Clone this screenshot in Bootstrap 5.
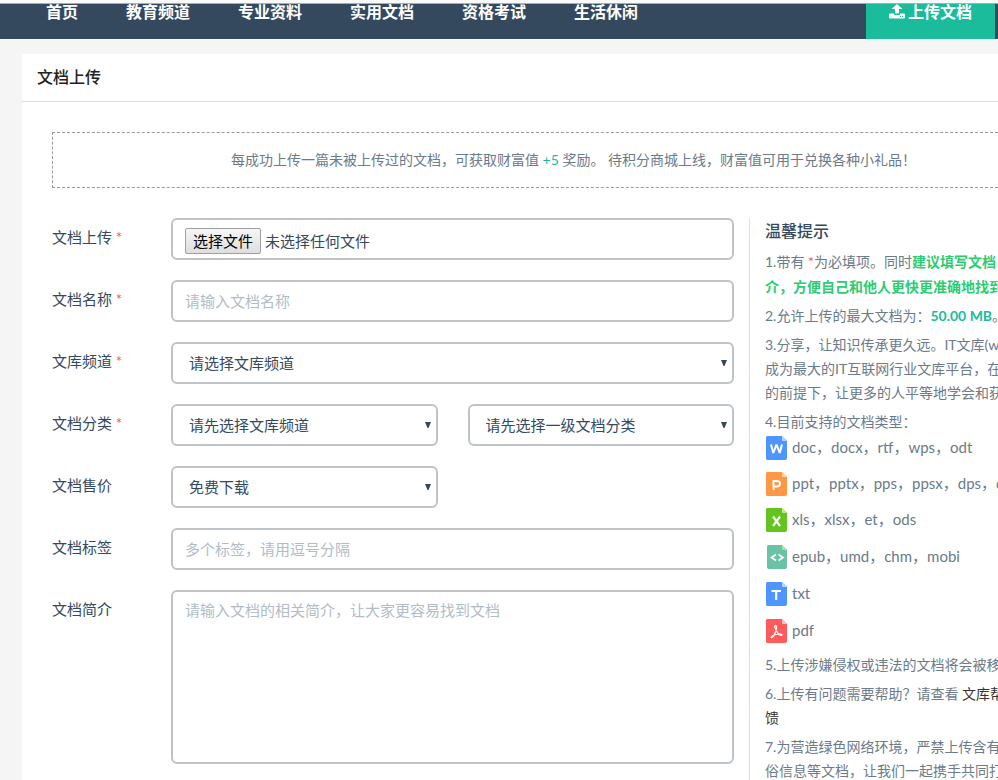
<!DOCTYPE html>
<html lang="zh-CN">
<head>
<meta charset="utf-8">
<meta name="viewport" content="width=device-width, initial-scale=1">
<title>文档上传</title>
<link href="https://cdn.jsdelivr.net/npm/bootstrap@5.3.0/dist/css/bootstrap.min.css" rel="stylesheet">
<style>
body{background:#f5f5f5;color:#34495e;font-family:Lato,"Noto Sans CJK SC",sans-serif;font-size:15px}
.top-edge{height:4px;border-bottom:1px solid #a9adb1;background:#fbfbfb}
.site-nav{background:#34495e;font-size:16px;font-weight:700;line-height:16px;height:35px;padding:0 3px 0 22px}
.site-nav a{color:#fff;text-decoration:none;padding:0 24px;display:block}
.site-nav .upload-link{background:#1abc9c;padding:0 23px;gap:3px;display:flex}
.page-panel{margin:15px 0 0 22px}
.panel-title{font-size:16px;font-weight:500;line-height:45px;padding:0 15px 2px;border-bottom:1px solid #ddd;color:#222}
.panel-content{padding:30px 0 0 30px}
.notice{border:1px dashed #999;border-right:0;line-height:54px;font-size:14px;color:#6c7a89;padding-left:96px;margin-bottom:30px}
.accent{color:#1abc9c}
.star{color:#e85a5a}
.field{margin-bottom:20px}
.field-label{width:119px;line-height:38px}
.form-control,.form-select{border:2px solid #bdc3c7;border-radius:6px;color:#34495e;font-size:15px;height:42px;padding:0 12px;line-height:24px}
.form-control::placeholder{color:#b2bcc5;opacity:1}
.form-select{padding:0 16px;background-image:url("data:image/svg+xml,%3Csvg xmlns='http://www.w3.org/2000/svg' viewBox='0 0 6 6'%3E%3Cpath fill='%2334495e' d='M0 0h6L3.5 6h-1z'/%3E%3C/svg%3E");background-size:6px 6px;background-position:right 5px center}
textarea.form-control{height:174px;padding-top:6px;resize:none}
.pick-file{border:1px solid #a0a0a0;border-radius:2px;background:linear-gradient(#f6f6f6,#dedede);color:#000;line-height:24px;padding:0 7px}
.pair{display:grid;grid-template-columns:1fr 1fr;gap:30px}
.tips{width:249px;margin-left:15px;border-left:1px solid #ddd;padding-left:15px;font-size:14px;line-height:24px;color:#6c7a89;white-space:nowrap}
.tips h2{font-size:16px;font-weight:500;line-height:26px;margin-bottom:5px;color:#34495e}
.tips p{margin-bottom:5px}
.tips .lead-tip{line-height:25px}
.tips strong{color:#2ecc71}
.tips strong.accent{color:#1abc9c}
.tips a{color:#333;text-decoration:none}
.tips .types-tip{margin-bottom:2px}
.types{margin:0 0 10px;font-size:15px}
.types li{display:flex;gap:5px;line-height:22px;height:24px;margin-bottom:12px}
.types li:nth-child(n+3){margin-bottom:13px}
.types li:last-child{margin-bottom:0}
.types svg{width:22px;height:24px;flex:none}
</style>
<script src="https://cdn.jsdelivr.net/npm/bootstrap@5.3.0/dist/js/bootstrap.bundle.min.js"></script>
</head>
<body class="vh-100 overflow-hidden d-flex flex-column">
<div class="top-edge flex-shrink-0"></div>
<nav class="site-nav d-flex flex-shrink-0">
  <ul class="list-unstyled d-flex mb-0 flex-grow-1">
    <li><a href="#">首页</a></li>
    <li><a href="#">教育频道</a></li>
    <li><a href="#">专业资料</a></li>
    <li><a href="#">实用文档</a></li>
    <li><a href="#">资格考试</a></li>
    <li><a href="#">生活休闲</a></li>
  </ul>
  <a class="upload-link" href="#"><svg width="16" height="16" viewBox="0 0 16 16" fill="#fff" aria-hidden="true"><path d="M8 0l5.500 5H10v4.500H6V5H2.500z"/><path fill-rule="evenodd" d="M1 9.500h4v1q0 .5 1 .5h4q1 0 1-.5v-1h4q1 0 1 1v3q0 1-1 1H1q-1 0-1-1v-3q0-1 1-1zM11 12v1h1v-1zM13 12v1h1v-1z"/></svg>上传文档</a>
</nav>
<main class="page-panel bg-white flex-grow-1 overflow-hidden">
  <h1 class="panel-title mb-0">文档上传</h1>
  <div class="panel-content">
    <div class="notice text-center text-nowrap">每成功上传一篇未被上传过的文档，可获取财富值 <span class="accent">+5</span> 奖励。 待积分商城上线，财富值可用于兑换各种小礼品！</div>
    <div class="d-flex">
      <form class="flex-fill">
        <div class="field d-flex">
          <label class="field-label flex-shrink-0" for="doc-file">文档上传 <span class="star">*</span></label>
          <div class="form-control d-flex align-items-center gap-1 pt-1 position-relative">
            <input class="visually-hidden" type="file" id="doc-file" tabindex="-1">
            <button class="pick-file" type="button" onclick="document.getElementById('doc-file').click()">选择文件</button>
            <span>未选择任何文件</span>
          </div>
        </div>
        <div class="field d-flex">
          <label class="field-label flex-shrink-0" for="doc-name">文档名称 <span class="star">*</span></label>
          <input class="form-control" id="doc-name" type="text" placeholder="请输入文档名称">
        </div>
        <div class="field d-flex">
          <label class="field-label flex-shrink-0" for="channel">文库频道 <span class="star">*</span></label>
          <select class="form-select" id="channel"><option>请选择文库频道</option></select>
        </div>
        <div class="field d-flex">
          <label class="field-label flex-shrink-0" for="category">文档分类 <span class="star">*</span></label>
          <div class="pair flex-fill">
            <select class="form-select" id="category"><option>请先选择文库频道</option></select>
            <select class="form-select" aria-label="二级文档分类"><option>请先选择一级文档分类</option></select>
          </div>
        </div>
        <div class="field d-flex">
          <label class="field-label flex-shrink-0" for="price">文档售价</label>
          <div class="pair flex-fill">
            <select class="form-select" id="price"><option>免费下载</option></select>
          </div>
        </div>
        <div class="field d-flex">
          <label class="field-label flex-shrink-0" for="tags">文档标签</label>
          <input class="form-control" id="tags" type="text" placeholder="多个标签，请用逗号分隔">
        </div>
        <div class="field d-flex">
          <label class="field-label flex-shrink-0" for="intro">文档简介</label>
          <textarea class="form-control" id="intro" placeholder="请输入文档的相关简介，让大家更容易找到文档"></textarea>
        </div>
      </form>
      <aside class="tips flex-shrink-0 overflow-hidden">
        <h2>温馨提示</h2>
        <p class="lead-tip">1.带有 <span class="star">*</span>为必填项。同时<strong>建议填写文档<br>介，方便自己和他人更快更准确地找到</strong></p>
        <p>2.允许上传的最大文档为：<strong class="accent">50.00 MB</strong>。</p>
        <p>3.分享，让知识传承更久远。IT文库(www<br>成为最大的IT互联网行业文库平台，在<br>的前提下，让更多的人平等地学会和获</p>
        <p class="types-tip">4.目前支持的文档类型：</p>
        <ul class="types list-unstyled">
          <li><svg viewBox="0 0 22 24" aria-hidden="true"><path fill="#4e95ff" d="M2 0h15l5 5v17q0 2-2 2H2q-1 0-1-2V2q0-2 1-2z"/><path fill="#b9d5ff" d="M17 0l5 5h-4q-1 0-1-1z"/><path fill="none" stroke="#fff" stroke-width="2" stroke-linejoin="bevel" d="M6 8.500l2.300 8.500 3.200-8.500 3.200 8.500L17 8.500"/></svg>doc，docx，rtf，wps，odt</li>
          <li><svg viewBox="0 0 22 24" aria-hidden="true"><path fill="#ff9743" d="M2 0h15l5 5v17q0 2-2 2H2q-1 0-1-2V2q0-2 1-2z"/><path fill="#ffd5b4" d="M17 0l5 5h-4q-1 0-1-1z"/><path fill="none" stroke="#fff" stroke-width="2" d="M8.500 18V9H12q3 0 3 2.700T12 14.400H8.500"/></svg>ppt，pptx，pps，ppsx，dps，dpt</li>
          <li><svg viewBox="0 0 22 24" aria-hidden="true"><path fill="#62c41c" d="M2 0h15l5 5v17q0 2-2 2H2q-1 0-1-2V2q0-2 1-2z"/><path fill="#c0e7a4" d="M17 0l5 5h-4q-1 0-1-1z"/><path fill="none" stroke="#fff" stroke-width="2.200" d="M8 8.500l7 9.500M15 8.500L8 18"/></svg>xls，xlsx，et，ods</li>
          <li><svg viewBox="0 0 22 24" aria-hidden="true"><path fill="#6ac3a5" d="M3 0h14l5 5v17q0 2-2 2H4q-2 0-2-2V2q0-2 1-2z"/><path fill="#a6e0a5" d="M17 0l5 5h-4q-1 0-1-1z"/><path fill="none" stroke="#fff" stroke-width="1.700" d="M11 9.500L6.500 12.500l4.500 3M13.500 9.500l4.500 3-4.500 3"/></svg>epub，umd，chm，mobi</li>
          <li><svg viewBox="0 0 22 24" aria-hidden="true"><path fill="#4e95ff" d="M2 0h15l5 5v17q0 2-2 2H2q-1 0-1-2V2q0-2 1-2z"/><path fill="#b9d5ff" d="M17 0l5 5h-4q-1 0-1-1z"/><path fill="none" stroke="#fff" stroke-width="2.200" d="M6.500 9h9.500M11.200 9v9"/></svg>txt</li>
          <li><svg viewBox="0 0 22 24" aria-hidden="true"><path fill="#ff5a5c" d="M2 0h15l5 5v17q0 2-2 2H2q-1 0-1-2V2q0-2 1-2z"/><path fill="#ffc0c0" d="M17 0l5 5h-4q-1 0-1-1z"/><path fill="none" stroke="#fff" stroke-width="1.200" d="M10.500 6.500q-1.300 0-.4 2.500 2.500 6.500 6 7.500 1.500 0 .8-1-2-1.200-6 0-4 1-4.800 2.800 1 1.200 2.900-2Q12 10.500 11.500 7.500q-.2-1-1-1z"/></svg>pdf</li>
        </ul>
        <p>5.上传涉嫌侵权或违法的文档将会被移</p>
        <p>6.上传有问题需要帮助？请查看 <a href="#">文库帮助<br>馈</a></p>
        <p>7.为营造绿色网络环境，严禁上传含有<br>俗信息等文档，让我们一起携手共同打</p>
      </aside>
    </div>
  </div>
</main>
</body>
</html>
